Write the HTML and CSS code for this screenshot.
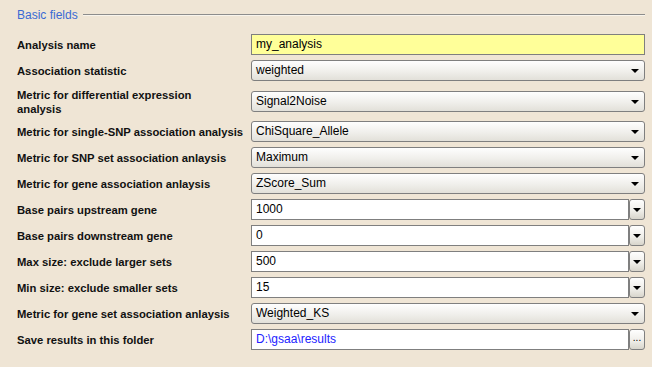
FILE: index.html
```html
<!DOCTYPE html>
<html lang="en">
<head>
    <meta charset="UTF-8">
    <title>Basic fields</title>
    <link rel="stylesheet" href="styles.css">
</head>
<body>
    <div class="section-title">
        <span>Basic fields</span>
        <div class="rule"></div>
    </div>
    <div class="form-grid">
        <label>Analysis name</label>
        <div class="text-field highlight">my_analysis</div>

        <label>Association statistic</label>
        <div class="dropdown">weighted<span class="arrow"></span></div>

        <label class="two-line">Metric for differential expression analysis</label>
        <div class="dropdown">Signal2Noise<span class="arrow"></span></div>

        <label>Metric for single-SNP association analysis</label>
        <div class="dropdown">ChiSquare_Allele<span class="arrow"></span></div>

        <label>Metric for SNP set association anlaysis</label>
        <div class="dropdown">Maximum<span class="arrow"></span></div>

        <label>Metric for gene association anlaysis</label>
        <div class="dropdown">ZScore_Sum<span class="arrow"></span></div>

        <label>Base pairs upstream gene</label>
        <div class="combo"><div class="text-field">1000</div><div class="side-btn"><span class="arrow"></span></div></div>

        <label>Base pairs downstream gene</label>
        <div class="combo"><div class="text-field">0</div><div class="side-btn"><span class="arrow"></span></div></div>

        <label>Max size: exclude larger sets</label>
        <div class="combo"><div class="text-field">500</div><div class="side-btn"><span class="arrow"></span></div></div>

        <label>Min size: exclude smaller sets</label>
        <div class="combo"><div class="text-field">15</div><div class="side-btn"><span class="arrow"></span></div></div>

        <label>Metric for gene set association anlaysis</label>
        <div class="dropdown">Weighted_KS<span class="arrow"></span></div>

        <label>Save results in this folder</label>
        <div class="combo"><div class="text-field path">D:\gsaa\results</div><div class="side-btn dots">...</div></div>
    </div>
</body>
</html>
```

FILE: styles.css
```css
body {
    margin: 0;
    padding: 8px 7px 0 17px;
    background: #efe5d5;
    font-family: Tahoma, "Liberation Sans", Arial, sans-serif;
    font-size: 11px;
    color: #000;
}
.section-title {
    display: flex;
    align-items: center;
    gap: 5px;
    height: 14px;
    color: #3a6ad4;
    font-size: 12px;
}
.rule {
    flex: 1;
    border-top: 1px solid #8c8c8c;
    border-bottom: 1px solid #f8f4ec;
}
.form-grid {
    display: grid;
    grid-template-columns: 234px 394px;
    row-gap: 5px;
    align-items: center;
    margin-top: 12px;
}
.form-grid label {
    font-weight: bold;
    font-size: 11.25px;
    line-height: 14px;
    color: #111;
}
.form-grid label.two-line {
    padding: 2px 40px 0 0;
    height: 30px;
    box-sizing: border-box;
}
.text-field {
    height: 21px;
    box-sizing: border-box;
    border: 1px solid #7f7f7f;
    background: #fff;
    padding: 0 4px;
    line-height: 19px;
    font-size: 12px;
    white-space: nowrap;
}
.highlight {
    background: #ffff99;
}
.path {
    color: #2222ff;
}
.dropdown {
    position: relative;
    height: 21px;
    box-sizing: border-box;
    border: 1px solid #7f7f7f;
    border-radius: 3px;
    background: linear-gradient(#fefefe, #f0efeb 55%, #e2e0d9);
    padding: 0 4px;
    line-height: 19px;
    font-size: 12px;
}
.dropdown .arrow {
    position: absolute;
    right: 5px;
    top: 8px;
}
.arrow {
    width: 0;
    height: 0;
    border-left: 4px solid transparent;
    border-right: 4px solid transparent;
    border-top: 4px solid #000;
}
.combo {
    display: flex;
}
.combo .text-field {
    flex: 1;
}
.side-btn {
    width: 16px;
    height: 21px;
    box-sizing: border-box;
    border: 1px solid #7f7f7f;
    border-radius: 3px;
    background: linear-gradient(#fefefe, #f0efea 55%, #d8d5cc);
    display: flex;
    align-items: center;
    justify-content: center;
}
.dots {
    font-size: 10px;
    line-height: 12px;
    padding-bottom: 3px;
}
```
